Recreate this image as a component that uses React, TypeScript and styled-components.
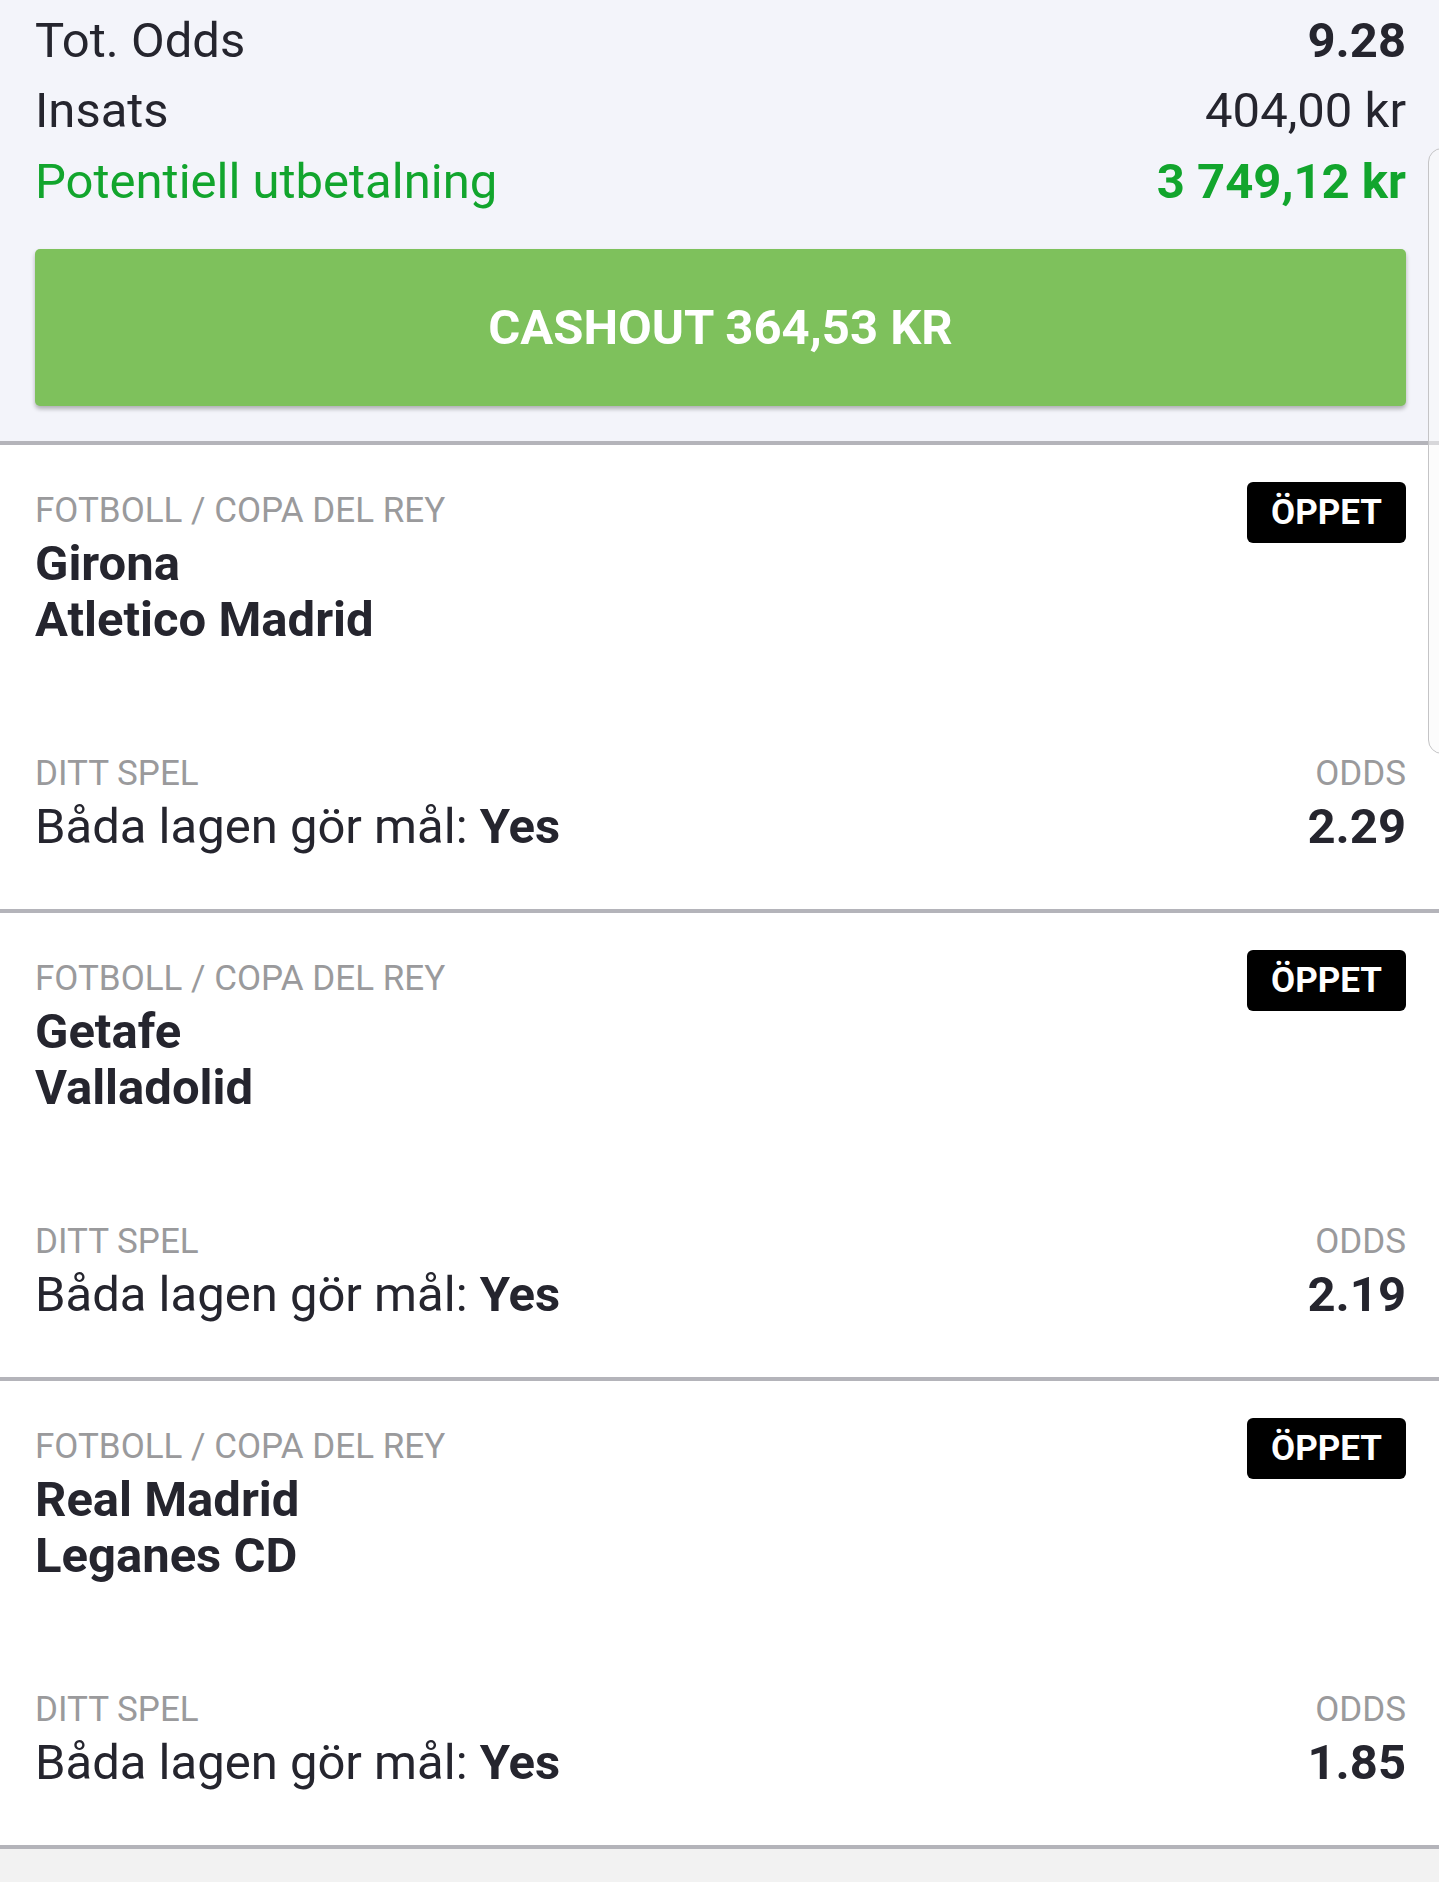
import styled, { createGlobalStyle } from 'styled-components';

const GlobalStyle = createGlobalStyle`
    html, body {
        margin: 0;
        padding: 0;
        background: #f2f2f2;
    }
    body {
        font-family: Roboto, "Noto Sans", "Liberation Sans", sans-serif;
        color: #25252e;
    }
`;

const Page = styled.main`
    position: relative;
    width: 1439px;
    min-height: 1882px;
    background: #f2f2f2;
    overflow: hidden;
`;

const Summary = styled.section`
    background: #f3f4fa;
    padding: 5px 33px 35px 35px;
    border-bottom: 4px solid #b4b4ba;
`;

const SummaryRow = styled.div<{ $green?: boolean }>`
    display: flex;
    justify-content: space-between;
    align-items: center;
    height: 70.5px;
    font-size: 49px;
    color: ${p => (p.$green ? '#12a52d' : '#25252e')};
`;

const Value = styled.span<{ $bold?: boolean }>`
    font-weight: ${p => (p.$bold ? 700 : 400)};
`;

const CashoutButton = styled.button`
    display: block;
    width: 100%;
    height: 157px;
    margin-top: 32px;
    border: none;
    border-radius: 5px;
    background: #7ec15c;
    color: #fff;
    font-family: Roboto, "Liberation Sans", sans-serif;
    font-size: 49px;
    font-weight: 700;
    box-shadow: 0 3px 4px rgba(0, 0, 0, 0.28);
`;

const Card = styled.article`
    background: #fff;
    padding: 37px 33px 54px 35px;
    border-bottom: 4px solid #b4b4ba;
`;

const CardHead = styled.div`
    display: flex;
    justify-content: space-between;
    align-items: flex-start;
`;

const Info = styled.div`
    padding-top: 9px;
`;

const Label = styled.div`
    font-size: 35px;
    line-height: 40px;
    color: #9a9a9c;
    text-transform: uppercase;
`;

const Teams = styled.div`
    margin-top: 5px;
    font-size: 49px;
    line-height: 56px;
    font-weight: 700;
`;

const Badge = styled.span`
    display: inline-flex;
    align-items: center;
    justify-content: center;
    width: 159px;
    height: 61px;
    border-radius: 6px;
    background: #000;
    color: #fff;
    font-size: 35px;
    font-weight: 700;
`;

const CardFoot = styled.div`
    display: flex;
    justify-content: space-between;
    align-items: flex-end;
    margin-top: 106px;
`;

const Column = styled.div<{ $right?: boolean }>`
    text-align: ${p => (p.$right ? 'right' : 'left')};
`;

const Line = styled.div<{ $bold?: boolean }>`
    margin-top: 5px;
    font-size: 49px;
    line-height: 56px;
    font-weight: ${p => (p.$bold ? 700 : 400)};
    b {
        font-weight: 700;
    }
`;

const EdgePanel = styled.div`
    position: absolute;
    left: 1428px;
    top: 148px;
    width: 40px;
    height: 604px;
    border: 1.5px solid #c4c4c6;
    border-radius: 14px;
    background: rgba(250, 250, 250, 0.5);
`;

const bets = [
    { home: 'Girona', away: 'Atletico Madrid', odds: '2.29' },
    { home: 'Getafe', away: 'Valladolid', odds: '2.19' },
    { home: 'Real Madrid', away: 'Leganes CD', odds: '1.85' }
];

export default function App() {
    return (
        <Page>
            <GlobalStyle />
            <Summary>
                <SummaryRow>
                    <span>Tot. Odds</span>
                    <Value $bold>9.28</Value>
                </SummaryRow>
                <SummaryRow>
                    <span>Insats</span>
                    <Value>404,00 kr</Value>
                </SummaryRow>
                <SummaryRow $green>
                    <span>Potentiell utbetalning</span>
                    <Value $bold>3 749,12 kr</Value>
                </SummaryRow>
                <CashoutButton>CASHOUT 364,53 KR</CashoutButton>
            </Summary>
            {bets.map(bet => (
                <Card key={bet.home}>
                    <CardHead>
                        <Info>
                            <Label>Fotboll / Copa del Rey</Label>
                            <Teams>
                                {bet.home}
                                <br />
                                {bet.away}
                            </Teams>
                        </Info>
                        <Badge>ÖPPET</Badge>
                    </CardHead>
                    <CardFoot>
                        <Column>
                            <Label>Ditt spel</Label>
                            <Line>
                                Båda lagen gör mål: <b>Yes</b>
                            </Line>
                        </Column>
                        <Column $right>
                            <Label>Odds</Label>
                            <Line $bold>{bet.odds}</Line>
                        </Column>
                    </CardFoot>
                </Card>
            ))}
            <EdgePanel />
        </Page>
    );
}
